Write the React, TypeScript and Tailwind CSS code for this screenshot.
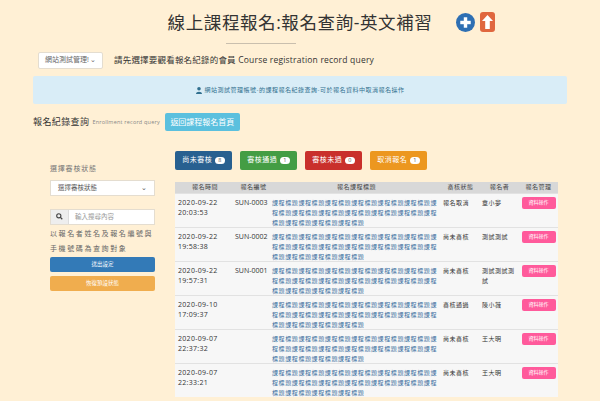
import React from "react";

const rows = [
  ["2020-09-22", "20:03:53", "SUN-0003", "報名取消", "章小夢"],
  ["2020-09-22", "19:58:38", "SUN-0002", "尚未審核", "測試測試"],
  ["2020-09-22", "19:57:31", "SUN-0001", "尚未審核", "測試測試測試"],
  ["2020-09-10", "17:09:37", "", "審核通過", "陳小薇"],
  ["2020-09-07", "22:37:32", "", "尚未審核", "王大明"],
  ["2020-09-07", "22:33:21", "", "尚未審核", "王大明"],
];
const title = "課程標題".repeat(16);

export default function App() {
  return (
    <div className="w-[600px] h-[401px] overflow-hidden bg-[#fff0d5] text-[#333]" style={{ fontFamily: '"Open Sans","Noto Sans CJK TC",sans-serif' }}>
      <div className="relative h-[48px] flex justify-center pt-[7px]">
        <div className="text-[17.5px] leading-[30px] tracking-[0.6px] text-[#333]">線上課程報名:報名查詢-英文補習</div>
        <div className="absolute left-[456px] top-[12px] flex items-center gap-[5px]">
          <svg width="19" height="19" viewBox="0 0 20 20"><circle cx="10" cy="10" r="10" fill="#2e6fb3"/><rect x="4.5" y="8.2" width="11" height="3.6" fill="#fff"/><rect x="8.2" y="4.5" width="3.6" height="11" fill="#fff"/></svg>
          <svg width="15" height="20" viewBox="0 0 15 20"><rect width="15" height="20" rx="3" fill="#e0673f"/><path d="M7.5 3 L13 9 H9.8 V17 H5.2 V9 H2 Z" fill="#fff"/></svg>
        </div>
        <div className="absolute left-[226px] top-[43px] w-[70px] h-[1px] bg-[#c9bfae]" />
      </div>
      <div className="flex items-center h-[25px] pl-[38px] gap-[11px]">
        <div className="w-[65px] h-[17px] bg-white border border-[#e4ddd0] rounded-[2px] text-[7px] text-[#666] flex items-center px-[6px] justify-between">網站測試管理!<span>⌄</span></div>
        <div className="text-[8.5px] tracking-[0.2px]">請先選擇要觀看報名紀錄的會員 Course registration record query</div>
      </div>
      <div className="mx-[33px] mt-[3px] h-[28px] bg-[#d9edf7] rounded-[2px] flex items-center justify-center text-[6px] text-[#31708f] tracking-[0.5px] gap-[3px]">
        <svg width="6" height="7" viewBox="0 0 6 7"><circle cx="3" cy="1.8" r="1.8" fill="#31708f"/><path d="M0 7 C0 4 6 4 6 7Z" fill="#31708f"/></svg>
        網站測試管理帳號-的課程報名紀錄查詢-可於報名資料中取消報名操作
      </div>
      <div className="flex items-center pl-[33px] mt-[9px] gap-[3px] h-[18px]">
        <span className="text-[9px] tracking-[0.4px]">報名紀錄查詢</span>
        <span className="text-[5.5px] text-[#888] tracking-[0.2px]">Enrollment record query</span>
        <span className="ml-[2px] h-[18px] w-[75px] bg-[#5bc0de] text-white text-[8px] flex items-center justify-center rounded-[2px]">返回課程報名首頁</span>
      </div>
      <div className="flex mt-[20px]">
        <div className="w-[105px] ml-[50px] pt-[13px] text-[#555]">
          <div className="text-[7px] tracking-[0.8px] text-[#777]">選擇審核狀態</div>
          <div className="mt-[5px] h-[16px] bg-white border border-[#e4ddd0] text-[6.5px] flex items-center justify-between px-[7px]">選擇審核狀態<span>⌄</span></div>
          <div className="mt-[13px] h-[16px] bg-white border border-[#e4ddd0] flex">
            <div className="w-[18px] bg-[#eee] border-r border-[#ddd] flex items-center justify-center">
              <svg width="7" height="7" viewBox="0 0 10 10"><circle cx="4" cy="4" r="3" stroke="#444" strokeWidth="1.6" fill="none"/><path d="M6.3 6.3 L9 9" stroke="#444" strokeWidth="1.8"/></svg>
            </div>
            <div className="text-[6.5px] text-[#999] flex items-center pl-[6px]">輸入搜尋內容</div>
          </div>
          <div className="text-[7px] leading-[15px] tracking-[1.6px] mt-[1px] text-[#666]">以報名者姓名及報名編號與手機號碼為查詢對象</div>
          <div className="mt-[1px] h-[15px] bg-[#337ab7] rounded-[2px] text-white text-[5.5px] flex items-center justify-center">送出設定</div>
          <div className="mt-[4px] h-[15px] bg-[#f0ad4e] rounded-[2px] text-white text-[5.5px] flex items-center justify-center">恢復預設狀態</div>
        </div>
        <div className="ml-[20px] w-[383px]">
          <div className="flex gap-[8px] h-[19px] mb-[12px]">
            {[["尚未審核", "8", "bg-[#286090]"], ["審核通過", "1", "bg-[#449d44]"], ["審核未過", "0", "bg-[#c9302c]"], ["取消報名", "1", "bg-[#ec971f]"]].map(([t, n, c]) => (
              <div key={t} className={`${c} w-[57px] rounded-[2px] text-white text-[7px] tracking-[0.5px] flex items-center justify-center gap-[3px]`}>
                {t}<span className="bg-white text-[#555] rounded-full text-[5.5px] px-[3px] leading-[7px]">{n}</span>
              </div>
            ))}
          </div>
          <div className="flex h-[11px] bg-[#d8d8d8] text-[6px] tracking-[0.5px] items-center text-[#444]">
            <div className="w-[60px] text-center">報名時間</div>
            <div className="w-[37px] text-center">報名編號</div>
            <div className="w-[169px] text-center">報名課程標題</div>
            <div className="w-[39px] text-center">審核狀態</div>
            <div className="w-[39px] text-center">報名者</div>
            <div className="w-[39px] text-center">報名管理</div>
          </div>
          {rows.map((r, i) => (
            <div key={i} className="flex h-[34px] bg-[#f7f7f7] border-t border-[#e2e2e2] text-[#333]">
              <div className="w-[60px] pl-[3px] pt-[4px] text-[7px] leading-[10px] tracking-[0.3px]">{r[0]}<br />{r[1]}</div>
              <div className="w-[37px] pt-[4px] text-[7px] leading-[10px]">{r[2]}</div>
              <div className="w-[169px] pt-[4px] pr-[2px] text-[6px] leading-[10px] tracking-[0.6px] text-[#3b6fa0] break-all">{title}</div>
              <div className="w-[39px] pt-[4px] pl-[2px] text-[6px] tracking-[0.5px] leading-[10px]">{r[3]}</div>
              <div className="w-[39px] pt-[4px] pl-[2px] text-[6px] tracking-[0.5px] leading-[10px] break-all">{r[4]}</div>
              <div className="w-[39px] pt-[3px] flex justify-center">
                <div className="w-[34px] h-[12px] bg-[#ff5a9b] rounded-[2px] text-white text-[5px] flex items-center justify-center">資料操作</div>
              </div>
            </div>
          ))}
        </div>
      </div>
    </div>
  );
}
